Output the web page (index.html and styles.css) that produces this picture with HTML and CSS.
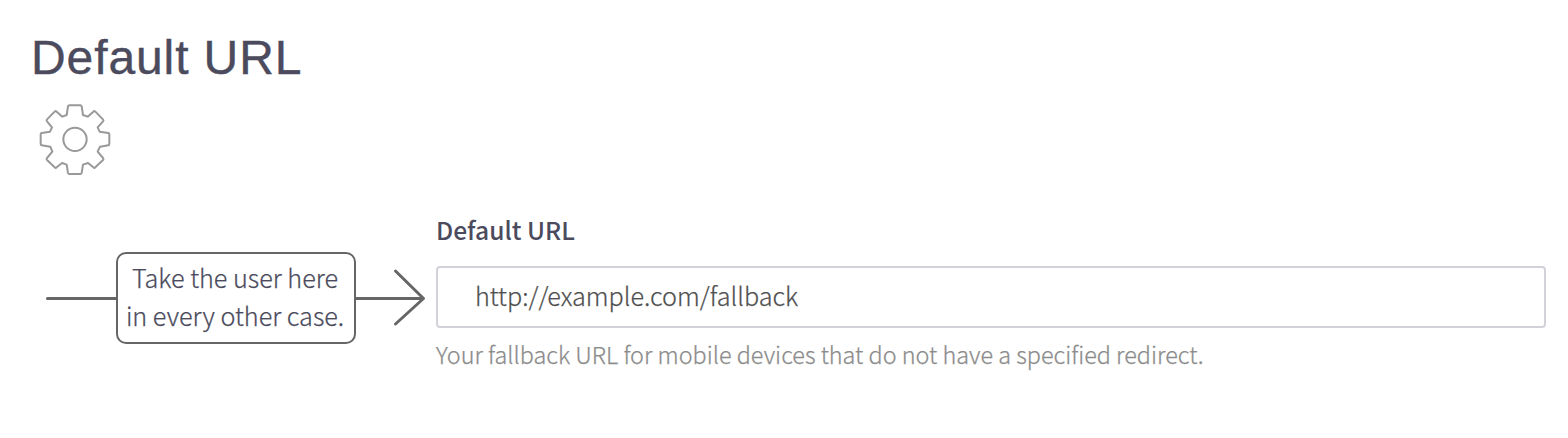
FILE: index.html
```html
<!DOCTYPE html>
<html lang="en">
<head>
<meta charset="utf-8">
<title>Default URL</title>
<link rel="stylesheet" href="styles.css">
</head>
<body>
<main class="panel">
  <h1 class="title">Default URL</h1>
  <svg class="gear" viewBox="0 0 270 270" aria-hidden="true">
    <path d="M118 31H151Q154 31 155 34L159 60L173 65L190 50Q193 47 196 50L219 73Q222 76 219 79L203 97L209 110L235 114Q238 115 238 118V146Q238 150 235 151L210 155L203 170L219 189Q222 192 219 195L196 217Q193 220 190 217L174 204L159 209L155 234Q154 237 151 237H118Q115 237 114 234L110 209L96 204L80 217Q77 220 74 217L51 195Q48 192 51 189L67 170L61 155L35 151Q32 150 32 146V118Q32 115 35 114L60 110L66 97L51 79Q48 76 51 73L74 50Q77 47 80 50L97 65L110 60L114 34Q115 31 118 31Z"/>
    <circle cx="135" cy="133" r="35"/>
  </svg>
  <section class="rule">
    <div class="flow">
      <span class="line"></span>
      <p class="condition">Take the user here<br>in every other case.</p>
      <svg class="arrow" viewBox="0 0 70 60" aria-hidden="true">
        <path class="shaft" d="M0 30.500H67"/>
        <path class="head" d="M39.500 3L67.500 30.500L39.500 56"/>
      </svg>
    </div>
    <div class="field">
      <label class="label" for="fallback">Default URL</label>
      <input class="input" id="fallback" type="text" value="http://example.com/fallback">
      <p class="help">Your fallback URL for mobile devices that do not have a specified redirect.</p>
    </div>
  </section>
</main>
</body>
</html>
```
FILE: styles.css
```css
* { box-sizing: border-box; }
body {
  margin: 0;
  background: #fff;
  color: #4b4b5d;
  font-family: "Noto Sans CJK SC", "Noto Sans", sans-serif;
  font-weight: 300;
  -webkit-text-stroke-width: 0.25px;
}
.panel { padding: 30px 22px 0 30px; }
.title {
  margin: 0;
  height: 65px;
  padding-left: 1px;
  font: 400 48px/56px "Liberation Sans", sans-serif;
  letter-spacing: 0.9px;
  -webkit-text-stroke-width: 0.4px;
}
.gear {
  display: block;
  width: 90px;
  height: 90px;
  fill: none;
  stroke: #999;
  stroke-width: 6;
  stroke-linejoin: round;
}
.rule { display: flex; padding-top: 25px; }
.flow {
  display: flex;
  align-items: flex-start;
  width: 406px;
  padding: 42px 0 0 16px;
}
.line {
  width: 70px;
  height: 3px;
  margin-top: 45px;
  background: #666;
  border-radius: 2px 0 0 2px;
}
.condition {
  width: 240px;
  height: 92px;
  margin: 0;
  padding: 4px 2px 4px 0;
  border: 2px solid #666;
  border-radius: 10px;
  font-size: 25.2px;
  line-height: 38px;
  text-align: center;
  white-space: nowrap;
}
.arrow {
  width: 70px;
  height: 60px;
  margin-top: 16px;
  fill: none;
  stroke: #666;
  stroke-width: 3;
  stroke-linecap: round;
  stroke-linejoin: round;
}
.shaft { stroke-linecap: butt; }
.field { flex: 1; }
.label {
  display: block;
  height: 56px;
  font-size: 24.6px;
  font-weight: 500;
  line-height: 38px;
  -webkit-text-stroke-width: 0;
}
.input {
  display: block;
  width: 1110px;
  height: 62px;
  padding: 0 37px 4px;
  border: 2px solid #d2d2d9;
  border-radius: 4px;
  background: #fff;
  color: #505050;
  font: inherit;
  font-size: 25.2px;
}
.help {
  margin: 7px 0 0;
  color: #8c8c8c;
  font-size: 23.4px;
  line-height: 38px;
  white-space: nowrap;
}
```
